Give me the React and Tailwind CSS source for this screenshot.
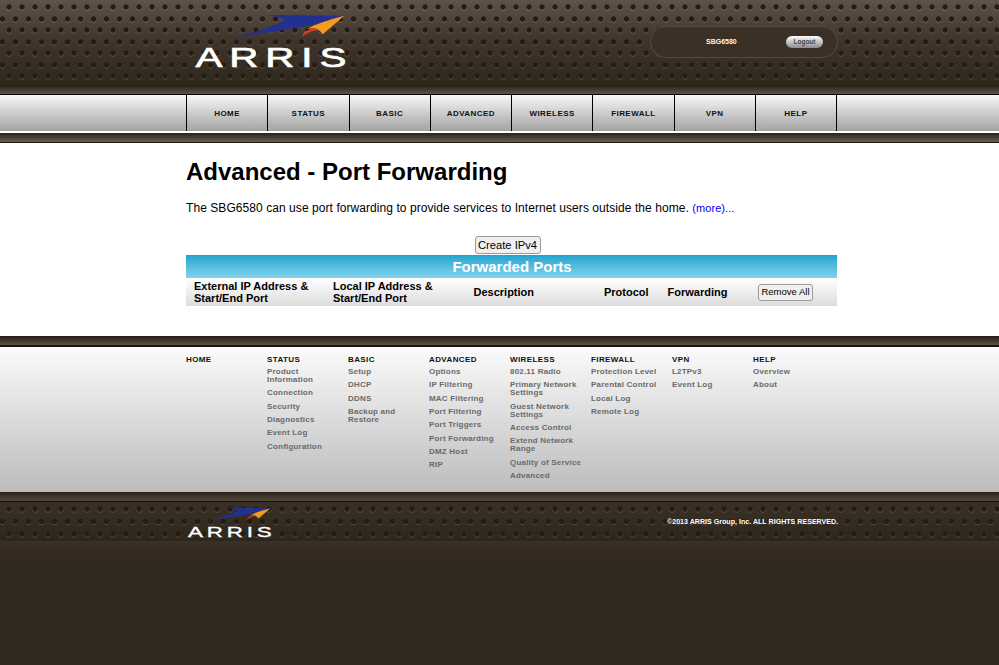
const navItems = ['HOME', 'STATUS', 'BASIC', 'ADVANCED', 'WIRELESS', 'FIREWALL', 'VPN', 'HELP'];

const footerCols = [
  { title: 'HOME', items: [] },
  { title: 'STATUS', items: ['Product Information', 'Connection', 'Security', 'Diagnostics', 'Event Log', 'Configuration'] },
  { title: 'BASIC', items: ['Setup', 'DHCP', 'DDNS', 'Backup and Restore'] },
  { title: 'ADVANCED', items: ['Options', 'IP Filtering', 'MAC Filtering', 'Port Filtering', 'Port Triggers', 'Port Forwarding', 'DMZ Host', 'RIP'] },
  { title: 'WIRELESS', items: ['802.11 Radio', 'Primary Network Settings', 'Guest Network Settings', 'Access Control', 'Extend Network Range', 'Quality of Service', 'Advanced'] },
  { title: 'FIREWALL', items: ['Protection Level', 'Parental Control', 'Local Log', 'Remote Log'] },
  { title: 'VPN', items: ['L2TPv3', 'Event Log'] },
  { title: 'HELP', items: ['Overview', 'About'] },
];

function Logo({ className }) {
  return (
    <svg viewBox="100 30 480 190" className={className}>
      <path d="M325 45 L555 47 L445 78 Q360 92 212 115 Q330 88 376 62 Q368 54 325 45 Z" fill="#22318f" />
      <path d="M555 47 L490 103 Q480 88 462 84 L442 87 Q480 66 555 47 Z" fill="#f59a23" />
      <path d="M428 111 Q428 92 466 84 L480 90 Q448 90 428 111 Z" fill="#e23d2a" />
      <text x="106" y="202" fontSize="82" fill="#fff" stroke="#fff" strokeWidth="2" fontFamily="'Liberation Sans', sans-serif" letterSpacing="14" textLength="476" lengthAdjust="spacingAndGlyphs">ARRIS</text>
    </svg>
  );
}

export default function App() {
  return (
    <div className="min-h-screen flex flex-col bg-[#32291f] font-['Liberation_Sans',Arial,sans-serif] text-black">
      {/* top dotted header */}
      <div className="h-[85px] shrink-0 flex items-start pl-[193px] bg-[radial-gradient(circle_at_9px_7px,#251c14_2.3px,transparent_3px),radial-gradient(circle_at_2.5px_19px,#251c14_2.3px,transparent_3px),radial-gradient(circle_at_9px_8px,rgba(255,255,255,0.12)_2.5px,transparent_3.2px),radial-gradient(circle_at_2.5px_20px,rgba(255,255,255,0.12)_2.5px,transparent_3.2px),linear-gradient(to_bottom,#5e5349,#40362c_45%,#2f261c)] [background-size:13px_23px,13px_23px,13px_23px,13px_23px,100%_100%]">
        <Logo className="w-[160px] h-[63px] mt-[10px] shrink-0" />
        <div className="ml-[297px] mt-[26px] w-[188px] h-[32px] shrink-0 rounded-[16px] border border-[#544a40] bg-[#3a3026] flex items-center">
          <span className="ml-[55px] w-[33px] text-[7px] font-bold text-[#fff6e0] whitespace-nowrap">SBG6580</span>
          <button className="ml-[47px] w-[37px] h-[12px] rounded-[6px] bg-gradient-to-b from-[#ffffff] to-[#8c8c8c] text-[6.5px] font-bold text-[#444] flex items-center justify-center">Logout</button>
        </div>
      </div>

      <div className="h-[9px] shrink-0 bg-gradient-to-b from-[#272018] to-[#5f544a]"></div>

      {/* main nav */}
      <div className="h-[39px] shrink-0 border-t border-black bg-gradient-to-b from-[#f8f8f8] to-[#a3a3a3] border-b-2 border-b-white">
        <div className="ml-[186px] w-[651px] h-full flex border-r border-black">
          {navItems.map((item) => (
            <div key={item} className="flex-1 border-l border-black flex items-center justify-center pt-[1px] text-[8px] font-bold tracking-[0.45px] text-[#111]">
              {item}
            </div>
          ))}
        </div>
      </div>

      <div className="h-[10px] shrink-0 bg-gradient-to-b from-[#2b231a] to-[#6a5f55] border-b border-[#1c1710]"></div>

      {/* content */}
      <div className="h-[193px] shrink-0 bg-white">
        <div className="ml-[186px] w-[651px]">
          <h1 className="pt-[14px] text-[24px] leading-[30px] font-bold">Advanced - Port Forwarding</h1>
          <p className="mt-[13px] text-[12px] leading-[16px] tracking-[0.065px]">
            The SBG6580 can use port forwarding to provide services to Internet users outside the home.{' '}
            <span className="text-[11px] text-[#0000ee]">(more)</span><span className="text-[11px] text-[#00008b]">...</span>
          </p>
          <div className="mt-[20px] mb-[1px] flex justify-center pr-[8px]">
            <button className="w-[66px] h-[18px] rounded-[3px] border border-[#9a9a9a] bg-[#f0f0f0] text-[11.2px] flex items-center justify-center">Create IPv4</button>
          </div>
          <div className="h-[23px] pt-[1px] pl-[1px] bg-gradient-to-b from-[#1ca3cd] to-[#80d4f0] text-white text-[15px] font-bold flex items-center justify-center">Forwarded Ports</div>
          <div className="h-[28px] flex items-center bg-gradient-to-b from-[#ffffff] to-[#dcdcdc] text-[11px] leading-[12px] font-bold">
            <div className="w-[139px] pl-[8px] shrink-0">External IP Address &amp;<br />Start/End Port</div>
            <div className="w-[141px] shrink-0 pl-[8px]">Local IP Address &amp;<br />Start/End Port</div>
            <div className="w-[138px] shrink-0 pl-[7.5px]">Description</div>
            <div className="w-[63.5px] shrink-0">Protocol</div>
            <div className="w-[90.5px] shrink-0">Forwarding</div>
            <button className="w-[55px] h-[17px] shrink-0 whitespace-nowrap rounded-[3px] border border-[#9a9a9a] bg-[#f0f0f0] text-[9.5px] font-normal flex items-center justify-center">Remove All</button>
          </div>
        </div>
      </div>

      <div className="h-[11px] shrink-0 bg-gradient-to-b from-[#261f17] to-[#5c5146] border-b-2 border-b-[#17130e]"></div>

      {/* footer links */}
      <div className="h-[145px] shrink-0 bg-gradient-to-b from-[#fbfbfb] to-[#bcbcbc]">
        <div className="ml-[186px] flex pt-[9px]">
          {footerCols.map((col) => (
            <div key={col.title} className="w-[81px] shrink-0 pr-[6px]">
              <div className="text-[8px] leading-[8px] font-bold tracking-[0.4px] text-[#111]">{col.title}</div>
              <div className="mt-[4px] flex flex-col gap-[5.33px]">
                {col.items.map((item) => (
                  <div key={item} className="text-[8px] leading-[8px] font-bold tracking-[0.2px] text-[#6a6a6a]">{item}</div>
                ))}
              </div>
            </div>
          ))}
        </div>
      </div>

      <div className="h-[10px] shrink-0 bg-gradient-to-b from-[#2a231a] to-[#54493e] border-b border-[#14100b]"></div>

      {/* bottom dotted strip */}
      <div className="h-[39px] shrink-0 flex items-start pl-[187px] bg-[radial-gradient(circle_at_9px_7px,#251c14_2.3px,transparent_3px),radial-gradient(circle_at_2.5px_19.5px,#251c14_2.3px,transparent_3px),radial-gradient(circle_at_9px_8px,rgba(255,255,255,0.12)_2.5px,transparent_3.2px),radial-gradient(circle_at_2.5px_20.5px,rgba(255,255,255,0.12)_2.5px,transparent_3.2px),linear-gradient(to_bottom,#3a3026,#2e261c)] [background-size:13px_25px,13px_25px,13px_25px,13px_25px,100%_100%]">
        <Logo className="w-[88px] h-[35px] mt-[3px] shrink-0" />
        <div className="ml-[392px] mt-[16px] text-[7.1px] leading-[8px] font-bold text-white whitespace-nowrap">©2013 ARRIS Group, Inc. ALL RIGHTS RESERVED.</div>
      </div>

      <div className="flex-1 bg-[linear-gradient(to_bottom,#3a3026,#32291f_16px)]"></div>
    </div>
  );
}
